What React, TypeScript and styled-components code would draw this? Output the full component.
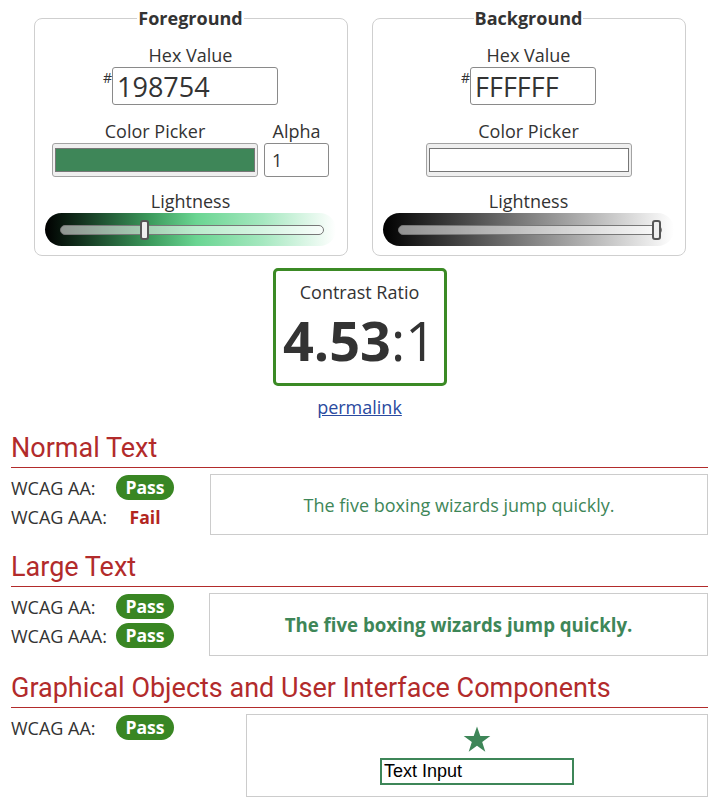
// Libraries Imports
import React, { FC } from "react";
import styled, { createGlobalStyle } from "styled-components";

// Local Data
const TEXT = "#333333";
const RED = "#b22b2b";
const PASS = "#398623";
const SAMPLE = "#3e8658";
const SAMPLE_TEXT = "The five boxing wizards jump quickly.";

const FG_GRADIENT =
  "linear-gradient(to right, #000 0%, #12301d 12%, #3c9a5c 36%, #6ad592 52%, #a6e8c0 75%, #fff 100%)";
const BG_GRADIENT = "linear-gradient(to right, #000 0%, #808080 50%, #fff 100%)";

type Result = "pass" | "fail";

const Badge: FC<{ result: Result }> = ({ result }) => (
  <BadgeCell>
    {result === "pass" ? <PassPill>Pass</PassPill> : <FailText>Fail</FailText>}
  </BadgeCell>
);

const ColorPanel: FC<{
  title: string;
  hex: string;
  hexWidth: number;
  swatch: string;
  gradient: string;
  lightness: number;
  alpha?: boolean;
}> = ({ title, hex, hexWidth, swatch, gradient, lightness, alpha }) => (
  <Panel>
    <Legend>{title}</Legend>
    <Label>Hex Value</Label>
    <HexRow>
      <Hash>#</Hash>
      <HexInput $width={hexWidth} defaultValue={hex} />
    </HexRow>
    <PickerRow>
      <PickerCol>
        <Label>Color Picker</Label>
        <Swatch type="color" defaultValue={swatch} />
      </PickerCol>
      {alpha && (
        <PickerCol>
          <Label>Alpha</Label>
          <AlphaInput defaultValue="1" />
        </PickerCol>
      )}
    </PickerRow>
    <Label $top={12}>Lightness</Label>
    <Band $gradient={gradient}>
      <Slider type="range" min={0} max={100} step={0.1} defaultValue={lightness} />
    </Band>
  </Panel>
);

const App: FC = () => {
  return (
    <>
      <GlobalStyle />
      <Page>
        <Panels>
          <ColorPanel
            title="Foreground"
            hex="198754"
            hexWidth={166}
            swatch="#3e8658"
            gradient={FG_GRADIENT}
            lightness={31.4}
            alpha
          />
          <ColorPanel
            title="Background"
            hex="FFFFFF"
            hexWidth={126}
            swatch="#ffffff"
            gradient={BG_GRADIENT}
            lightness={100}
          />
        </Panels>

        <RatioBox>
          <RatioLabel>Contrast Ratio</RatioLabel>
          <RatioValue>
            <strong>4.53</strong>:1
          </RatioValue>
        </RatioBox>
        <Permalink href="#">permalink</Permalink>

        <Heading>Normal Text</Heading>
        <Section>
          <Checks>
            <CheckRow>
              <CheckLabel>WCAG AA:</CheckLabel>
              <Badge result="pass" />
            </CheckRow>
            <CheckRow>
              <CheckLabel>WCAG AAA:</CheckLabel>
              <Badge result="fail" />
            </CheckRow>
          </Checks>
          <SampleBox $height={61}>
            <SampleText>{SAMPLE_TEXT}</SampleText>
          </SampleBox>
        </Section>

        <Heading>Large Text</Heading>
        <Section>
          <Checks>
            <CheckRow>
              <CheckLabel>WCAG AA:</CheckLabel>
              <Badge result="pass" />
            </CheckRow>
            <CheckRow>
              <CheckLabel>WCAG AAA:</CheckLabel>
              <Badge result="pass" />
            </CheckRow>
          </Checks>
          <SampleBox $height={63} $shift={-1}>
            <SampleText $large>{SAMPLE_TEXT}</SampleText>
          </SampleBox>
        </Section>

        <Heading>Graphical Objects and User Interface Components</Heading>
        <Section>
          <Checks $width={235}>
            <CheckRow>
              <CheckLabel>WCAG AA:</CheckLabel>
              <Badge result="pass" />
            </CheckRow>
          </Checks>
          <ObjectBox>
            <svg width="28" height="27" viewBox="0 0 28 27" aria-hidden="true">
              <polygon
                fill={SAMPLE}
                points="14,0.5 17.3,10 27.3,10 19.2,16 22.3,25.8 14,19.8 5.7,25.8 8.8,16 0.7,10 10.7,10"
              />
            </svg>
            <DemoInput defaultValue="Text Input" />
          </ObjectBox>
        </Section>
      </Page>
    </>
  );
};

// Styled components
const GlobalStyle = createGlobalStyle`
  body {
    margin: 0;
    background: #fff;
    color: ${TEXT};
    font-family: "Open Sans", "Liberation Sans", sans-serif;
    font-size: 18px;
  }
  * { box-sizing: border-box; }
`;

const Page = styled.div`
  width: 721px;
  padding: 6px 13px 16px 11px;
  display: flex;
  flex-direction: column;
`;

const Panels = styled.div`
  display: flex;
  justify-content: center;
  gap: 24px;
`;

const Panel = styled.fieldset`
  width: 314px;
  margin: 0;
  padding: 13px 10px 9px;
  border: 1px solid #cfcfcf;
  border-radius: 8px;
  display: flex;
  flex-direction: column;
  align-items: center;
`;

const Legend = styled.legend`
  margin: 0 auto;
  padding: 0 1px;
  font-weight: 700;
  line-height: 24px;
`;

const Label = styled.div<{ $top?: number }>`
  margin-top: ${(p) => p.$top ?? 0}px;
  line-height: 24px;
  text-align: center;
`;

const HexRow = styled.div`
  display: flex;
  align-items: flex-start;
`;

const Hash = styled.span`
  font-size: 14px;
  line-height: 14px;
  margin-top: 4px;
`;

const HexInput = styled.input<{ $width: number }>`
  width: ${(p) => p.$width}px;
  height: 38px;
  padding: 0 4px;
  border: 1px solid #8a8a8a;
  border-radius: 3px;
  font-family: "Open Sans", sans-serif;
  font-size: 27px;
  color: ${TEXT};
  outline: none;
`;

const PickerRow = styled.div`
  margin-top: 14px;
  display: flex;
  gap: 6px;
`;

const PickerCol = styled.div`
  display: flex;
  flex-direction: column;
  align-items: center;
`;

const Swatch = styled.input`
  width: 206px;
  height: 34px;
  margin: 0;
  padding: 0;
  border: 1px solid #a3a3a3;
  border-radius: 3px;
  background: #efefef;
  &::-webkit-color-swatch-wrapper {
    padding: 4px 2px;
  }
  &::-webkit-color-swatch {
    border: 1px solid #777;
    border-radius: 0;
  }
`;

const AlphaInput = styled.input`
  width: 65px;
  height: 34px;
  padding: 0 7px;
  border: 1px solid #8a8a8a;
  border-radius: 3px;
  font-family: "Open Sans", sans-serif;
  font-size: 18px;
  color: ${TEXT};
  outline: none;
`;

const Band = styled.div<{ $gradient: string }>`
  width: 291px;
  height: 33px;
  padding: 0 12px 0 15px;
  border-radius: 17px;
  background: ${(p) => p.$gradient};
  display: flex;
  align-items: center;
`;

const Slider = styled.input`
  -webkit-appearance: none;
  appearance: none;
  width: 264px;
  height: 20px;
  margin: 0;
  background: transparent;
  &::-webkit-slider-runnable-track {
    box-sizing: border-box;
    height: 10px;
    border: 1px solid #777;
    border-radius: 5px;
    background: rgba(255, 255, 255, 0.55);
  }
  &::-webkit-slider-thumb {
    -webkit-appearance: none;
    box-sizing: border-box;
    width: 9px;
    height: 20px;
    margin-top: -6px;
    border: 2px solid #555;
    border-radius: 3px;
    background: #eee;
  }
`;

const RatioBox = styled.div`
  align-self: center;
  width: 174px;
  margin-top: 12px;
  padding: 9px 0 9px;
  border: 3px solid #3b8a25;
  border-radius: 5px;
  text-align: center;
`;

const RatioLabel = styled.div`
  line-height: 24px;
`;

const RatioValue = styled.div`
  margin-top: 3px;
  font-size: 54px;
  line-height: 67px;
  strong {
    font-weight: 700;
  }
`;

const Permalink = styled.a`
  align-self: center;
  margin-top: 9px;
  line-height: 24px;
  color: #2a4aa0;
`;

const Heading = styled.h2`
  margin: 14px 0 0;
  padding-bottom: 4px;
  border-bottom: 1px solid ${RED};
  font-family: Roboto, "Liberation Sans", sans-serif;
  font-weight: 400;
  font-size: 27px;
  line-height: 30px;
  color: ${RED};
`;

const Section = styled.div`
  margin-top: 6px;
  margin-bottom: 3px;
  display: flex;
  align-items: flex-start;
`;

const Checks = styled.div<{ $width?: number }>`
  width: ${(p) => p.$width ?? 199}px;
  margin-top: -1px;
  flex-shrink: 0;
  display: flex;
  flex-direction: column;
`;

const CheckRow = styled.div`
  height: 29px;
  display: flex;
  align-items: center;
`;

const CheckLabel = styled.span`
  width: 105px;
`;

const BadgeCell = styled.span`
  width: 58px;
  display: flex;
  justify-content: center;
`;

const PassPill = styled.span`
  height: 25px;
  padding: 0 9px;
  border-radius: 13px;
  background: ${PASS};
  color: #fff;
  font-weight: 700;
  font-size: 17.6px;
  line-height: 25px;
`;

const FailText = styled.span`
  color: #b3261e;
  font-weight: 700;
  font-size: 17.6px;
`;

const SampleBox = styled.div<{ $height: number; $shift?: number }>`
  flex: 1;
  height: ${(p) => p.$height}px;
  margin-left: ${(p) => p.$shift ?? 0}px;
  border: 1px solid #cccccc;
  display: flex;
  align-items: center;
  justify-content: center;
`;

const SampleText = styled.span<{ $large?: boolean }>`
  color: ${SAMPLE};
  font-size: ${(p) => (p.$large ? "18.66px" : "18px")};
  font-weight: ${(p) => (p.$large ? 700 : 400)};
`;

const ObjectBox = styled.div`
  flex: 1;
  height: 83px;
  padding-top: 11px;
  border: 1px solid #cccccc;
  display: flex;
  flex-direction: column;
  align-items: center;
  gap: 5px;
`;

const DemoInput = styled.input`
  width: 194px;
  height: 27px;
  padding: 0 2px;
  border: 2px solid ${SAMPLE};
  font-family: "Liberation Sans", Arial, sans-serif;
  font-size: 18px;
  color: #000;
  outline: none;
`;

export default App;
